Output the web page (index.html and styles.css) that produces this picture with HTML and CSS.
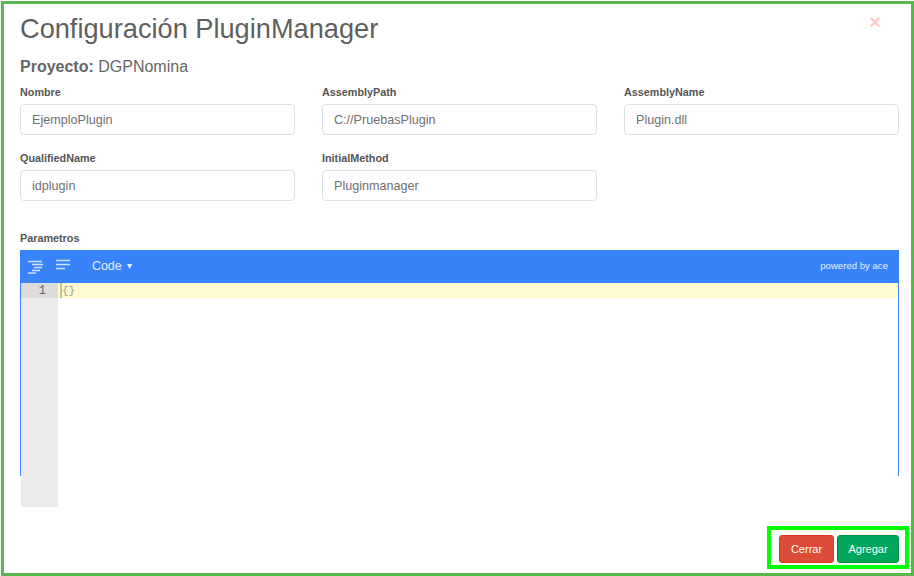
FILE: index.html
```html
<!DOCTYPE html>
<html lang="es">
<head>
<meta charset="utf-8">
<title>Configuración PluginManager</title>
<link rel="stylesheet" href="styles.css">
</head>
<body>
<div class="frame">
  <button class="close" type="button" aria-label="Cerrar">×</button>
  <h1 class="title">Configuración PluginManager</h1>
  <p class="project"><b>Proyecto:</b> DGPNomina</p>
  <div class="grid">
    <div class="field"><label>Nombre</label><div class="input">EjemploPlugin</div></div>
    <div class="field"><label>AssemblyPath</label><div class="input">C://PruebasPlugin</div></div>
    <div class="field"><label>AssemblyName</label><div class="input">Plugin.dll</div></div>
    <div class="field"><label>QualifiedName</label><div class="input">idplugin</div></div>
    <div class="field"><label>InitialMethod</label><div class="input">Pluginmanager</div></div>
  </div>
  <div class="params-label">Parametros</div>
  <div class="editor">
    <div class="toolbar">
      <svg class="tool-icon" width="16" height="14" viewBox="0 0 16 14"><path d="M0 1.5h14M4 4.5h11M6 7.5h8M4 10.5h8M0 13h8" stroke="#cfe0fd" stroke-width="1.3" fill="none"/></svg>
      <svg class="tool-icon second" width="16" height="12" viewBox="0 0 16 12"><path d="M1 1.5h14M1 5.5h14M1 9.5h9" stroke="#cfe0fd" stroke-width="1.6" fill="none"/></svg>
      <span class="mode">Code <i class="caret">▾</i></span>
      <span class="powered">powered by ace</span>
    </div>
    <div class="ace">
      <div class="gutter"><div class="gutter-active">1</div></div>
      <div class="code"><div class="line"><span class="cursor"></span>{}</div></div>
    </div>
  </div>
  <div class="footer">
    <div class="highlight">
      <button class="btn red" type="button">Cerrar</button>
      <button class="btn green" type="button">Agregar</button>
    </div>
  </div>
</div>
</body>
</html>
```
FILE: styles.css
```css
* { box-sizing: border-box; }
html, body { margin: 0; padding: 0; background: #fff; }
body { width: 914px; height: 576px; padding: 1px 0 0 1px; font-family: "Liberation Sans", Arial, sans-serif; color: #555; overflow: hidden; }
.frame { position: relative; width: 913px; height: 575px; border: 3px solid #55b74e; padding: 0 11px 0 16px; }
.close { position: absolute; top: 8px; right: 30px; border: 0; background: none; padding: 0; color: #ffc9c9; font: bold 20px/20px "Liberation Sans", sans-serif; }
.title { margin: 0; padding-top: 9px; font-size: 27.2px; line-height: 32px; font-weight: 400; color: #5f5f5f; }
.project { margin: 13px 0 0; font-size: 16px; line-height: 18px; color: #666; }
.grid { display: grid; grid-template-columns: repeat(3, 275px); column-gap: 27px; row-gap: 16px; margin-top: 9px; }
.field label { display: block; font-size: 10.8px; font-weight: 700; line-height: 14px; color: #555; margin-bottom: 5px; }
.input { height: 31px; border: 1px solid #dfe0e6; border-radius: 4px; padding: 0 11px; font-size: 12.6px; line-height: 31px; color: #707070; }
.params-label { margin-top: 30px; font-size: 10.8px; font-weight: 700; line-height: 14px; color: #555; }
.editor { margin-top: 5px; width: 879px; height: 226px; border-left: 1px solid #3883fa; border-right: 1px solid #3883fa; }
.toolbar { display: flex; align-items: center; height: 33px; margin: 0 -1px; background: #3883fa; padding: 0 11px 0 8px; color: #e3eefe; }
.tool-icon { flex: none; }
.tool-icon.second { margin-left: 11px; margin-bottom: 3px; }
.mode { margin-left: 21px; margin-bottom: 2px; font-size: 12.4px; }
.caret { font-style: normal; font-size: 10px; margin-left: 2px; position: relative; top: -1px; }
.powered { margin-left: auto; font-size: 9.6px; margin-bottom: 2px; }
.ace { display: flex; height: 193px; }
.gutter { width: 37px; height: 224px; background: #ebebeb; flex: none; }
.gutter-active { height: 15px; background: #dcdcdc; padding-right: 12px; text-align: right; font: 12px/16px "Liberation Mono", monospace; color: #666; }
.code { flex: 1; }
.line { position: relative; height: 15px; background: #fffbd0; padding-left: 4px; font: 11px/16px "Liberation Mono", monospace; color: #999; }
.cursor { position: absolute; left: 2px; top: 0; width: 2px; height: 15px; background: #c8c08a; }
.footer { display: flex; justify-content: flex-end; margin-top: 50px; margin-right: -11px; padding-right: 2px; }
.highlight { display: flex; gap: 3px; width: 142px; height: 43px; border: 4px solid #00ff00; padding: 5px 6px 2px 8px; }
.btn { border: 1px solid; border-radius: 3px; color: #fff; font: 11px "Liberation Sans", sans-serif; padding: 0; height: 28px; }
.red { width: 55px; background: #dd4b39; border-color: #d73925; }
.green { width: 62px; background: #00a65a; border-color: #008d4c; }
```
